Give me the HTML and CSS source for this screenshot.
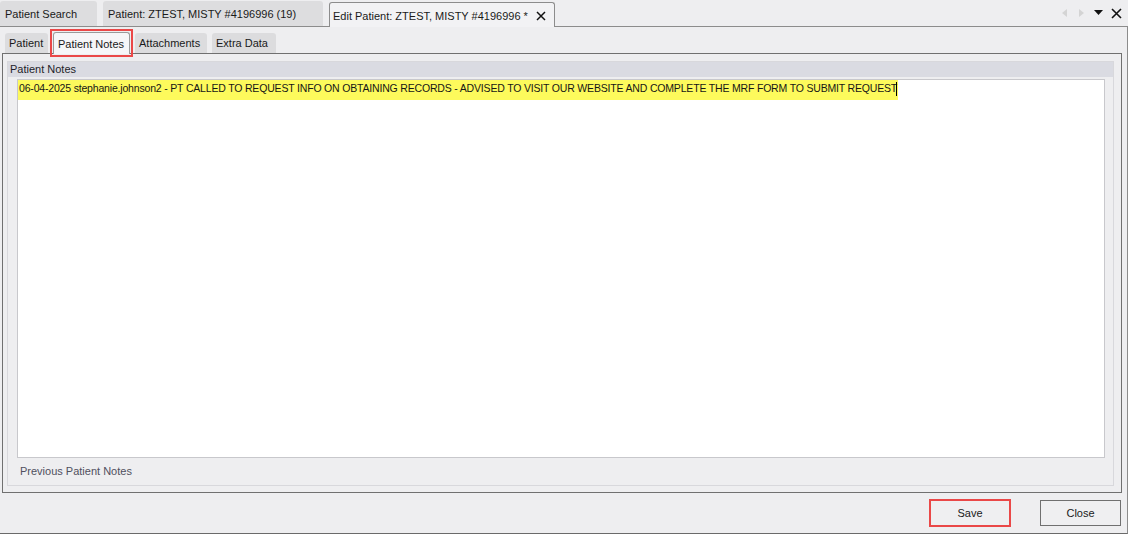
FILE: index.html
```html
<!DOCTYPE html>
<html>
<head>
<meta charset="utf-8">
<link rel="stylesheet" href="styles.css">
</head>
<body>
<div class="app">
  <div class="topbar">
    <div class="tabs">
      <div class="tab t1">Patient Search</div>
      <div class="tab t2">Patient: ZTEST, MISTY #4196996 (19)</div>
      <div class="tab t3 active"><span>Edit Patient: ZTEST, MISTY #4196996 *</span><svg class="tclose" width="10" height="10" viewBox="0 0 10 10"><path d="M1 1 L9 9 M9 1 L1 9" stroke="#111" stroke-width="1.5"/></svg></div>
    </div>
    <div class="ctrls">
      <svg width="8" height="8" viewBox="0 0 8 8"><path d="M6 0 L6 8 L1 4 Z" fill="#d4d4d4"/></svg>
      <svg width="8" height="8" viewBox="0 0 8 8"><path d="M2 0 L2 8 L7 4 Z" fill="#d4d4d4"/></svg>
      <svg width="9" height="6" viewBox="0 0 9 6"><path d="M0 0 L9 0 L4.5 5 Z" fill="#111"/></svg>
      <svg width="11" height="11" viewBox="0 0 11 11"><path d="M1 1 L10 10 M10 1 L1 10" stroke="#111" stroke-width="1.6"/></svg>
    </div>
  </div>
  <div class="frame">
    <div class="subtabs">
      <div class="stab s1">Patient</div>
      <div class="stab s2 active">Patient Notes</div>
      <div class="stab s3">Attachments</div>
      <div class="stab s4">Extra Data</div>
    </div>
    <div class="panel">
      <div class="group">
        <div class="ghead">Patient Notes</div>
        <div class="gbody">
          <div class="note"><span class="hl">06-04-2025 stephanie.johnson2 - PT CALLED TO REQUEST INFO ON OBTAINING RECORDS - ADVISED TO VISIT OUR WEBSITE AND COMPLETE THE MRF FORM TO SUBMIT REQUEST</span><span class="caret"></span></div>
          <div class="prev">Previous Patient Notes</div>
        </div>
      </div>
    </div>
    <div class="buttons">
      <div class="btn save">Save</div>
      <div class="btn close">Close</div>
    </div>
  </div>
</div>
</body>
</html>
```
FILE: styles.css
```css
html, body {
  margin: 0;
  padding: 0;
  background: #eeeef0;
}
body {
  font-family: Tahoma, "Liberation Sans", Arial, sans-serif;
  font-size: 11px;
  color: #1a1a1a;
  width: 1128px;
  height: 534px;
  overflow: hidden;
}
.app {
  display: flex;
  flex-direction: column;
  height: 534px;
}
.topbar {
  height: 26px;
  display: flex;
  justify-content: space-between;
  align-items: flex-end;
  border-bottom: 1px solid #8c8c8c;
  box-sizing: content-box;
}
.tabs {
  display: flex;
  align-items: flex-end;
  height: 26px;
}
.tab {
  height: 25px;
  box-sizing: border-box;
  background: #dddddf;
  border-radius: 3px 3px 0 0;
  padding: 7px 0 0 5px;
  margin-right: 6px;
  white-space: nowrap;
}
.t1 { width: 97px; }
.t2 { width: 220px; padding-left: 5px; }
.t3 {
  width: 226px;
  height: 25px;
  background: #f2f2f4;
  border: 1px solid #8c8c8c;
  border-bottom: none;
  margin-bottom: -1px;
  padding: 7px 0 0 3px;
  display: flex;
  justify-content: space-between;
}
.tclose {
  margin: 1px 8px 0 0;
}
.ctrls {
  display: flex;
  align-items: center;
  height: 26px;
  gap: 8px;
  padding-right: 6px;
}
.ctrls svg:nth-child(3) { margin-left: 1px; }
.frame {
  flex: 1;
  display: flex;
  flex-direction: column;
  border-right: 1px solid #8c8c8c;
  border-bottom: 1px solid #6a6a6a;
}
.subtabs {
  display: flex;
  align-items: flex-end;
  height: 26px;
  padding-left: 5px;
  gap: 5px;
}
.stab {
  height: 20px;
  box-sizing: border-box;
  background: #dcdcde;
  border-radius: 3px 3px 0 0;
  padding: 4px 0 0 4px;
  white-space: nowrap;
}
.s1 { width: 43px; }
.s2 {
  width: 77px;
  height: 22px;
  background: #f6f6f8;
  border: 1px solid #9a9a9a;
  border-bottom: none;
  padding: 5px 0 0 4px;
  margin-bottom: -1px;
  position: relative;
  z-index: 2;
}
.s2::after {
  content: "";
  position: absolute;
  left: -4px;
  right: -4px;
  top: -4px;
  bottom: -3px;
  border: 2px solid #ea4848;
}
.s3 { width: 72px; }
.s4 { width: 64px; }
.panel {
  margin: 0 5px 0 2px;
  height: 440px;
  box-sizing: border-box;
  border: 1px solid #707070;
  padding: 7px 7px 6px 4px;
}
.group {
  height: 100%;
  box-sizing: border-box;
  border: 1px solid #d8d8dc;
  display: flex;
  flex-direction: column;
}
.ghead {
  height: 15px;
  background: #dadbe2;
  padding: 1px 0 0 2px;
  box-sizing: border-box;
  color: #1e1e2a;
}
.gbody {
  flex: 1;
  display: flex;
  flex-direction: column;
  padding: 2px 8px 0 9px;
}
.note {
  height: 379px;
  box-sizing: border-box;
  background: #ffffff;
  border: 1px solid #c8c8cc;
  padding: 0;
  display: flex;
  align-items: flex-start;
}
.hl {
  background: #fdfa5c;
  height: 20px;
  line-height: 17px;
  padding: 0 1px 0 1px;
  white-space: nowrap;
  color: #161616;
  font-size: 10.5px;
  letter-spacing: -0.18px;
}
.caret {
  width: 1px;
  height: 14px;
  margin-top: 2px;
  background: #000;
  margin-left: -2px;
}
.prev {
  padding: 7px 0 0 3px;
  color: #50505e;
}
.buttons {
  flex: 1;
  display: flex;
  justify-content: flex-end;
  align-items: center;
  gap: 29px;
  padding-right: 6px;
}
.btn {
  box-sizing: border-box;
  display: flex;
  align-items: center;
  justify-content: center;
  background: #efeff1;
  color: #1a1a1a;
}
.save {
  width: 82px;
  height: 28px;
  border: 2px solid #ea4848;
}
.close {
  width: 81px;
  height: 26px;
  border: 1px solid #707070;
}
```
